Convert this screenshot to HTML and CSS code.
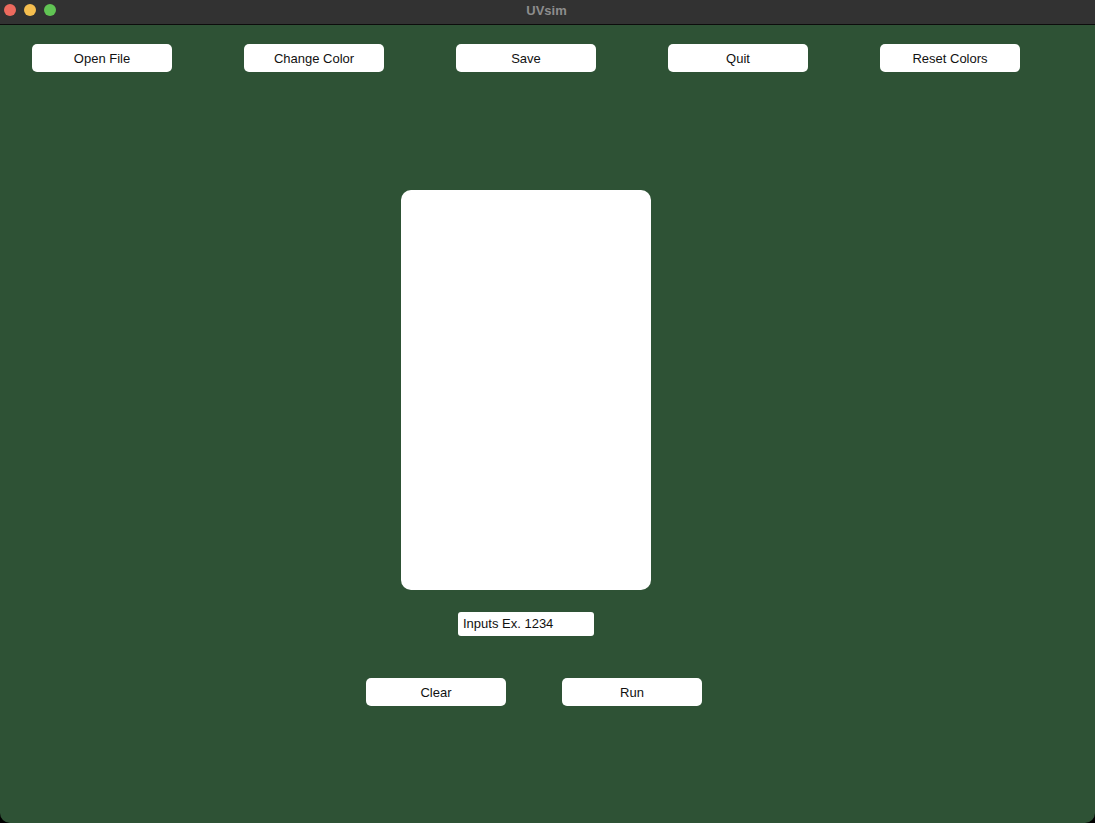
FILE: index.html
```html
<!DOCTYPE html>
<html>
<head>
<meta charset="utf-8">
<title>UVsim</title>
<link rel="stylesheet" href="styles.css">
</head>
<body>
<div class="window">
  <div class="titlebar">
    <div class="lights">
      <span class="light red"></span>
      <span class="light yellow"></span>
      <span class="light green"></span>
    </div>
    <div class="title">UVsim</div>
  </div>
  <div class="content">
    <div class="toolbar">
      <button class="btn">Open File</button>
      <button class="btn">Change Color</button>
      <button class="btn">Save</button>
      <button class="btn">Quit</button>
      <button class="btn">Reset Colors</button>
    </div>
    <div class="main">
      <div class="editor"></div>
      <div class="input">Inputs Ex. 1234</div>
    </div>
    <div class="actions">
      <button class="btn">Clear</button>
      <button class="btn">Run</button>
    </div>
  </div>
</div>
</body>
</html>
```

FILE: styles.css
```css
html, body {
  margin: 0;
  padding: 0;
  background: #000;
  width: 1095px;
  height: 823px;
  overflow: hidden;
}
.window {
  width: 1095px;
  height: 823px;
  background: #2e5235;
  border-radius: 0 0 10px 10px;
  overflow: hidden;
  display: flex;
  flex-direction: column;
  font-family: "Liberation Sans", Arial, sans-serif;
}
.titlebar {
  height: 24px;
  background: #323232;
  border-bottom: 1px solid #0c0c0c;
  position: relative;
  display: flex;
  align-items: center;
  justify-content: center;
}
.lights {
  position: absolute;
  left: 4px;
  top: 4px;
  display: flex;
  gap: 8px;
}
.light {
  width: 12px;
  height: 12px;
  border-radius: 50%;
  display: block;
}
.red { background: #ed6a5e; }
.yellow { background: #f5be4f; }
.green { background: #61c454; }
.title {
  color: #8d8d8d;
  font-weight: bold;
  font-size: 13px;
  margin-right: 2px;
  margin-top: -3px;
}
.content {
  flex: 1;
  display: flex;
  flex-direction: column;
}
.toolbar {
  display: flex;
  gap: 72px;
  padding: 19px 0 0 32px;
}
.btn {
  width: 140px;
  height: 28px;
  background: #fff;
  border: none;
  border-radius: 5px;
  font-family: "Liberation Sans", Arial, sans-serif;
  font-size: 13px;
  color: #111;
  padding: 0;
  margin: 0;
}
.main {
  width: 1052px;
  display: flex;
  flex-direction: column;
  align-items: center;
  margin-top: 118px;
}
.editor {
  width: 250px;
  height: 400px;
  background: #fff;
  border-radius: 10px;
}
.input {
  margin-top: 22px;
  width: 131px;
  height: 24px;
  padding-left: 5px;
  background: #fff;
  border-radius: 3px;
  font-size: 13px;
  line-height: 24px;
  color: #111;
}
.actions {
  display: flex;
  gap: 56px;
  padding-left: 366px;
  margin-top: 42px;
}
```
